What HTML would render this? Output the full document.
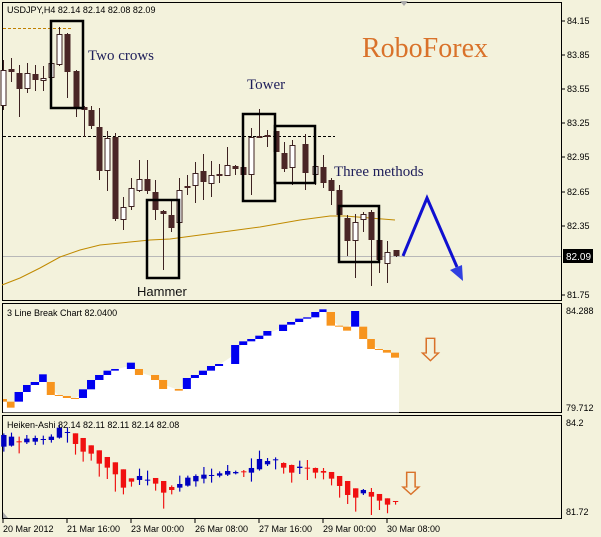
<!DOCTYPE html>
<html><head><meta charset="utf-8"><style>
body{margin:0;background:#f3f2dc;}
svg{display:block;}
</style></head><body>
<svg width="601" height="537" viewBox="0 0 601 537" xmlns="http://www.w3.org/2000/svg" font-family="Liberation Sans, sans-serif">
<rect width="601" height="537" fill="#f3f2dc"/>
<rect x="2.5" y="2.5" width="559" height="298" fill="#f3f2dc" stroke="#000"/>
<line x1="3" y1="256.5" x2="561" y2="256.5" stroke="#b8b8b8"/>
<line x1="3" y1="136.5" x2="335" y2="136.5" stroke="#000" stroke-dasharray="3,2"/>
<line x1="3" y1="28.5" x2="72" y2="28.5" stroke="#c08000" stroke-dasharray="3,2"/>
<polyline points="2,285 20,278 40,268 60,257 80,250 100,245 130,242 150,240 170,239 200,235 230,231 260,227 300,220 330,216 345,216 370,218 395,220" fill="none" stroke="#c08a00"/>
<path stroke="#3d2222" fill="none" d="M3.5 60V110M11.5 58V82M19.5 65V117M27.5 63V93M35.5 65V91M43.5 66V91M51.5 58V80M59.5 27V66M67.5 33V98M76.5 70V117M84.5 106V137M91.5 106V129M99.5 108V180M107.5 131V191M115.5 133V221M123.5 197V230M131.5 178V210M139.5 160V192M147.5 160V194M155.5 180V220M163.5 210V270M171.5 200V232M179.5 178V222M187.5 175V195M195.5 162V203M203.5 154V200M211.5 161V197M219.5 164V183M227.5 147V176M235.5 165V175M243.5 160V178M251.5 128V195M259.5 109V138M267.5 130V147M276.5 131V152M284.5 142V172M292.5 140V185M305.5 134V190M315.5 163V185M323.5 155V188M331.5 178V205M339.5 185V215M347.5 215V256M355.5 214V278M363.5 212V232M371.5 210V286M379.5 240V273M387.5 241V283M396.5 250V257"/>
<g fill="#4a2626">
<rect x="8.5" y="69" width="6" height="3"/><rect x="16.5" y="73" width="6" height="16"/><rect x="32.5" y="74" width="6" height="6"/><rect x="64.5" y="34" width="6" height="38"/><rect x="73.5" y="71" width="6" height="37"/><rect x="81.5" y="107" width="6" height="3"/><rect x="88.5" y="110" width="6" height="16"/><rect x="96.5" y="127" width="6" height="44"/><rect x="112.5" y="137" width="6" height="82"/><rect x="144.5" y="179" width="6" height="12"/><rect x="152.5" y="192" width="6" height="18"/><rect x="160.5" y="211" width="6" height="3"/><rect x="168.5" y="215" width="6" height="13"/><rect x="184.5" y="186" width="6" height="2"/><rect x="200.5" y="171" width="6" height="11"/><rect x="216.5" y="174" width="6" height="2"/><rect x="232.5" y="166" width="6" height="3"/><rect x="240.5" y="167" width="6" height="8"/><rect x="256.5" y="136" width="6" height="2"/><rect x="264.5" y="135" width="6" height="2"/><rect x="273.5" y="131" width="6" height="21"/><rect x="281.5" y="153" width="6" height="16"/><rect x="302.5" y="144" width="6" height="29"/><rect x="320.5" y="167" width="6" height="16"/><rect x="328.5" y="180" width="6" height="11"/><rect x="336.5" y="190" width="6" height="25"/><rect x="344.5" y="218" width="6" height="23"/><rect x="368.5" y="212" width="6" height="28"/><rect x="376.5" y="240" width="6" height="20"/><rect x="393.5" y="250" width="6" height="6"/>
</g>
<g fill="#fff" stroke="#3d2222">
<rect x="1" y="70.5" width="5" height="35"/><rect x="25" y="73.5" width="5" height="15"/><rect x="41" y="78.5" width="5" height="2"/><rect x="49" y="63.5" width="5" height="14"/><rect x="57" y="34.5" width="5" height="30"/><rect x="105" y="138.5" width="5" height="32"/><rect x="121" y="207.5" width="5" height="12"/><rect x="129" y="188.5" width="5" height="18"/><rect x="137" y="179.5" width="5" height="11"/><rect x="177" y="190.5" width="5" height="32"/><rect x="193" y="173.5" width="5" height="12"/><rect x="209" y="175.5" width="5" height="8"/><rect x="225" y="165.5" width="5" height="10"/><rect x="249" y="137.5" width="5" height="37"/><rect x="290" y="145.5" width="5" height="22"/><rect x="313" y="166.5" width="5" height="8"/><rect x="353" y="222.5" width="5" height="18"/><rect x="361" y="214.5" width="5" height="5"/><rect x="385" y="252.5" width="5" height="11"/>
</g>
<g fill="none" stroke="#000" stroke-width="2.5">
<rect x="51" y="21" width="32" height="87"/>
<rect x="147" y="200" width="32" height="78"/>
<rect x="243" y="114" width="32" height="87"/>
<rect x="275" y="126" width="40" height="57"/>
<rect x="339" y="206" width="40" height="56"/>
</g>
<g font-family="Liberation Serif, serif" font-size="15" fill="#1e1e5a">
<text x="88" y="60">Two crows</text>
<text x="247" y="89">Tower</text>
<text x="334" y="176">Three methods</text>
</g>
<text x="137" y="296" font-size="13" fill="#111">Hammer</text>
<text x="362" y="57" font-family="Liberation Serif, serif" font-size="28" fill="#d9722a">RoboForex</text>
<text x="7" y="13" font-size="9" fill="#000">USDJPY,H4  82.14 82.14 82.08 82.09</text>
<polygon points="400,1 408,1 404,6" fill="#aaa"/>
<polyline points="403,256 427,198 457,267" fill="none" stroke="#1010d0" stroke-width="3"/>
<polygon points="450,270 462,265 463,281" fill="#3040e0"/>
<g font-size="9" fill="#000">
<text x="567" y="24">84.15</text><text x="567" y="58">83.85</text><text x="567" y="92">83.55</text><text x="567" y="126">83.25</text><text x="567" y="160">82.95</text><text x="567" y="195">82.65</text><text x="567" y="229">82.35</text><text x="567" y="298">81.75</text>
</g>
<g stroke="#000"><line x1="562" y1="21" x2="565" y2="21"/><line x1="562" y1="55" x2="565" y2="55"/><line x1="562" y1="89" x2="565" y2="89"/><line x1="562" y1="123" x2="565" y2="123"/><line x1="562" y1="157" x2="565" y2="157"/><line x1="562" y1="192" x2="565" y2="192"/><line x1="562" y1="226" x2="565" y2="226"/><line x1="562" y1="295" x2="565" y2="295"/></g>
<rect x="563" y="249" width="30" height="14" fill="#000"/>
<text x="566" y="260" font-size="10" fill="#fff">82.09</text>

<rect x="2.5" y="303.5" width="559" height="109" fill="#f3f2dc" stroke="#000"/>
<g transform="translate(0,300) scale(0.3833,0.3333)">
<polygon points="8,300 28,314 49,290 70,265 91,250 112,234 133,266 153,286 174,291 195,295 216,281 237,254 259,232 280,218 300,209 341,197 362,216 405,232 425,253 466,270 487,250 508,229 529,218 550,205 571,195 613,163 634,129 655,120 676,112 697,100 738,83 759,70 780,61 801,54 822,44 843,32 863,56 884,78 905,86 926,56 947,98 968,132 988,148 1009,154 1030,165 1041,165 1041,337 8,337" fill="#fff"/>
<g fill="#f7941d">
<rect x="8" y="297" width="10" height="8"/><rect x="18" y="305" width="20" height="18"/><rect x="122" y="246" width="21" height="39"/><rect x="143" y="285" width="21" height="3"/><rect x="164" y="288" width="21" height="6"/><rect x="185" y="294" width="21" height="3"/><rect x="352" y="207" width="21" height="18"/><rect x="394" y="225" width="21" height="15"/><rect x="415" y="240" width="21" height="27"/><rect x="456" y="267" width="21" height="5"/><rect x="852" y="36" width="22" height="41"/><rect x="874" y="77" width="21" height="3"/><rect x="895" y="80" width="21" height="12"/><rect x="937" y="80" width="21" height="37"/><rect x="958" y="117" width="20" height="30"/><rect x="978" y="147" width="21" height="3"/><rect x="999" y="150" width="21" height="8"/><rect x="1020" y="158" width="21" height="15"/>
</g>
<g fill="#0000f0">
<rect x="38" y="276" width="22" height="29"/><rect x="60" y="255" width="20" height="21"/><rect x="80" y="246" width="22" height="9"/><rect x="102" y="223" width="20" height="23"/><rect x="206" y="268" width="21" height="26"/><rect x="227" y="240" width="21" height="28"/><rect x="248" y="225" width="22" height="15"/><rect x="270" y="212" width="20" height="13"/><rect x="290" y="207" width="20" height="5"/><rect x="331" y="188" width="21" height="19"/><rect x="477" y="234" width="21" height="33"/><rect x="498" y="225" width="21" height="9"/><rect x="519" y="212" width="21" height="13"/><rect x="540" y="198" width="21" height="14"/><rect x="561" y="192" width="21" height="6"/><rect x="603" y="135" width="21" height="57"/><rect x="624" y="124" width="21" height="11"/><rect x="645" y="117" width="21" height="7"/><rect x="666" y="107" width="21" height="10"/><rect x="687" y="93" width="21" height="14"/><rect x="728" y="74" width="21" height="19"/><rect x="749" y="66" width="21" height="8"/><rect x="770" y="56" width="21" height="10"/><rect x="791" y="52" width="21" height="4"/><rect x="812" y="36" width="21" height="16"/><rect x="833" y="28" width="19" height="8"/><rect x="916" y="33" width="21" height="47"/>
</g>
<path d="M1112,115 h22 v44 h10 l-21,23 l-21,-23 h10 z" fill="none" stroke="#d9722a" stroke-width="4"/>
</g>
<text x="7" y="316" font-size="9" fill="#000">3 Line Break Chart 82.0400</text>
<text x="566" y="314" font-size="9" fill="#000">84.288</text>
<text x="566" y="411" font-size="9" fill="#000">79.712</text>

<rect x="2.5" y="415.5" width="559" height="103" fill="#f3f2dc" stroke="#000"/>
<g transform="translate(0,300) scale(0.3833,0.3333)">
<path stroke="#0000c0" stroke-width="3" fill="none" d="M10 400V455M30 398V440M70 405V432M92 407V435M113 407V434M134 403V428M155 375V416M176 382V428M364 506V555M385 512V556M469 527V575M490 527V560M511 523V560M532 501V550M552 506V548M573 514V532M594 495V528M615 512V523M656 475V545M677 452V512M698 474V498M719 472V508M782 482V522M948 567V585"/>
<path stroke="#f01010" stroke-width="3" fill="none" d="M50 410V460M197 400V464M217 414V485M238 436V482M259 451V530M280 471V537M301 487V575M322 508V583M343 535V560M406 534V572M427 543V626M448 556V583M636 510V531M740 487V521M761 494V548M802 480V540M823 503V535M844 504V538M865 516V556M886 528V593M907 543V612M928 565V635M969 564V645M990 582V630M1011 595V640M1032 604V614"/>
<g fill="#0000c0">
<rect x="3" y="405" width="14" height="35"/><rect x="23" y="410" width="14" height="27"/><rect x="63" y="416" width="14" height="11"/><rect x="85" y="414" width="14" height="11"/><rect x="106" y="417" width="14" height="3"/><rect x="127" y="410" width="14" height="10"/><rect x="148" y="383" width="14" height="30"/><rect x="169" y="396" width="14" height="3"/><rect x="357" y="528" width="14" height="12"/><rect x="378" y="539" width="14" height="3"/><rect x="462" y="552" width="14" height="11"/><rect x="483" y="533" width="14" height="24"/><rect x="504" y="528" width="14" height="16"/><rect x="525" y="524" width="14" height="12"/><rect x="545" y="525" width="14" height="3"/><rect x="566" y="520" width="14" height="7"/><rect x="587" y="513" width="14" height="11"/><rect x="608" y="516" width="14" height="4"/><rect x="649" y="504" width="14" height="14"/><rect x="670" y="477" width="14" height="31"/><rect x="691" y="483" width="14" height="10"/><rect x="712" y="478" width="14" height="3"/><rect x="775" y="500" width="14" height="4"/><rect x="941" y="570" width="14" height="10"/>
</g>
<g fill="#f01010">
<rect x="43" y="424" width="14" height="3"/><rect x="190" y="400" width="14" height="32"/><rect x="210" y="414" width="14" height="41"/><rect x="231" y="436" width="14" height="25"/><rect x="252" y="451" width="14" height="40"/><rect x="273" y="471" width="14" height="32"/><rect x="294" y="487" width="14" height="36"/><rect x="315" y="508" width="14" height="55"/><rect x="336" y="535" width="14" height="10"/><rect x="399" y="534" width="14" height="17"/><rect x="420" y="543" width="14" height="35"/><rect x="441" y="561" width="14" height="9"/><rect x="629" y="514" width="14" height="3"/><rect x="733" y="489" width="14" height="14"/><rect x="754" y="495" width="14" height="23"/><rect x="795" y="503" width="14" height="3"/><rect x="816" y="504" width="14" height="14"/><rect x="837" y="513" width="14" height="5"/><rect x="858" y="516" width="14" height="20"/><rect x="879" y="528" width="14" height="30"/><rect x="900" y="543" width="14" height="42"/><rect x="921" y="565" width="14" height="28"/><rect x="962" y="576" width="14" height="14"/><rect x="983" y="582" width="14" height="20"/><rect x="1004" y="595" width="14" height="19"/><rect x="1025" y="603" width="14" height="3"/>
</g>
<path d="M1061,517 h22 v44 h10 l-21,22 l-21,-22 h10 z" fill="none" stroke="#d9722a" stroke-width="4"/>
</g>
<text x="7" y="428" font-size="9" fill="#000">Heiken-Ashi 82.14 82.11 82.11 82.14 82.08</text>
<text x="566" y="426" font-size="9" fill="#000">84.2</text>
<text x="566" y="515" font-size="9" fill="#000">81.72</text>
<polygon points="3,518 3,512 8,518" fill="#aaa"/>

<g stroke="#000"><line x1="3" y1="519" x2="3" y2="523"/><line x1="67" y1="519" x2="67" y2="523"/><line x1="131" y1="519" x2="131" y2="523"/><line x1="195" y1="519" x2="195" y2="523"/><line x1="259" y1="519" x2="259" y2="523"/><line x1="323" y1="519" x2="323" y2="523"/><line x1="387" y1="519" x2="387" y2="523"/></g>
<g font-size="9" fill="#000">
<text x="3" y="532">20 Mar 2012</text><text x="67" y="532">21 Mar 16:00</text><text x="131" y="532">23 Mar 00:00</text><text x="195" y="532">26 Mar 08:00</text><text x="259" y="532">27 Mar 16:00</text><text x="323" y="532">29 Mar 00:00</text><text x="387" y="532">30 Mar 08:00</text>
</g>
</svg>
</body></html>
